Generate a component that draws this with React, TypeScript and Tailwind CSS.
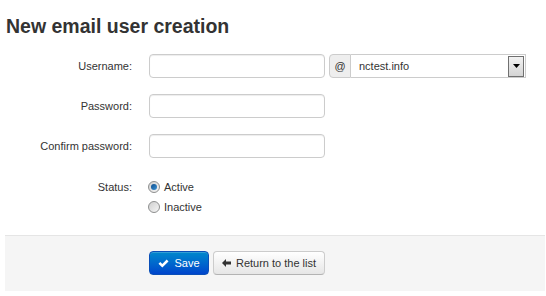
import { useState } from 'react';

function Field({ label, children }: { label: string; children: React.ReactNode }) {
    return (
        <div className="flex items-center h-[24px]">
            <label className="w-[128px] text-right pr-[1px] text-[11px]">{label}</label>
            <div className="pl-[16px] flex items-center">{children}</div>
        </div>
    );
}

function TextInput({ type = 'text' }: { type?: string }) {
    return (
        <input
            type={type}
            className="w-[176px] h-[24px] border border-[#cccccc] rounded-[4px] bg-white px-[6px] text-[11px] shadow-[inset_0_1px_1px_rgba(0,0,0,0.075)] outline-none"
        />
    );
}

function Radio({ checked, label, onClick }: { checked: boolean; label: string; onClick: () => void }) {
    return (
        <button type="button" onClick={onClick} className="flex items-center h-[20px] gap-[4px] text-[11px] text-[#333]">
            <span className="w-[12px] h-[12px] rounded-full border border-[#8e8f8f] bg-gradient-to-br from-[#cfcfcf] to-[#f6f6f6] flex items-center justify-center">
                {checked && <span className="w-[6px] h-[6px] rounded-full bg-gradient-to-br from-[#0d4d8c] to-[#3d94d6]" />}
            </span>
            <span>{label}</span>
        </button>
    );
}

export default function App() {
    const [active, setActive] = useState(true);

    return (
        <div className="w-[540px] ml-[5px] font-['Liberation_Sans',Arial,sans-serif] text-[#333333] bg-white">
            {/* Title */}
            <h1 className="text-[19.5px] leading-[24px] font-bold pt-[14px] pl-[1px] text-[#333333]">
                New email user creation
            </h1>

            {/* Form rows */}
            <div className="mt-[16px] flex flex-col gap-[16px]">
                <Field label="Username:">
                    <TextInput />
                    <div className="ml-[4px] flex h-[24px]">
                        <span className="w-[22px] h-[24px] border border-[#cccccc] rounded-l-[4px] bg-[#eeeeee] flex items-center justify-center text-[11px] text-[#333]">
                            @
                        </span>
                        <div className="w-[175px] h-[24px] border border-l-0 border-[#cccccc] bg-white flex items-center justify-between pl-[8px] pr-[1px]">
                            <span className="text-[11px] text-[#333]">nctest.info</span>
                            <span className="w-[16px] h-[21px] border border-[#707070] bg-gradient-to-b from-[#f2f2f2] to-[#d4d4d4] flex items-center justify-center">
                                <svg width="7" height="4" viewBox="0 0 7 4">
                                    <path d="M0 0h7L3.5 4z" fill="#000" />
                                </svg>
                            </span>
                        </div>
                    </div>
                </Field>
                <Field label="Password:">
                    <TextInput type="password" />
                </Field>
                <Field label="Confirm password:">
                    <TextInput type="password" />
                </Field>
            </div>

            {/* Status */}
            <div className="mt-[19px] flex">
                <div className="w-[128px] text-right pr-[1px] text-[11px] leading-[20px]">Status:</div>
                <div className="pl-[15px] flex flex-col">
                    <Radio checked={active} label="Active" onClick={() => setActive(true)} />
                    <Radio checked={!active} label="Inactive" onClick={() => setActive(false)} />
                </div>
            </div>

            {/* Footer actions */}
            <div className="mt-[18px] border-t border-[#e5e5e5] bg-[#f5f5f5] pt-[15px] pb-[16px] pl-[144px] flex gap-[4px]">
                <button
                    type="button"
                    className="w-[60px] h-[24px] rounded-[4px] border border-[#0a4fb8] bg-gradient-to-b from-[#0088cc] to-[#0044cc] text-white text-[11px] flex items-center justify-center gap-[5px] shadow-[inset_0_1px_0_rgba(255,255,255,0.2)]"
                >
                    <svg width="11" height="9" viewBox="0 0 11 9">
                        <path d="M0.5 4.8l1.8-1.8 2 2L8.7 0.6l1.8 1.8-6.2 6.2z" fill="#fff" />
                    </svg>
                    Save
                </button>
                <button
                    type="button"
                    className="w-[112px] h-[24px] rounded-[4px] border border-[#cccccc] border-b-[#b3b3b3] bg-gradient-to-b from-white to-[#e6e6e6] text-[#333] text-[11px] flex items-center justify-center gap-[5px]"
                >
                    <svg width="9" height="8" viewBox="0 0 9 8">
                        <path d="M0 4l4-4v2.5h5v3H4V8z" fill="#333" />
                    </svg>
                    Return to the list
                </button>
            </div>
        </div>
    );
}
